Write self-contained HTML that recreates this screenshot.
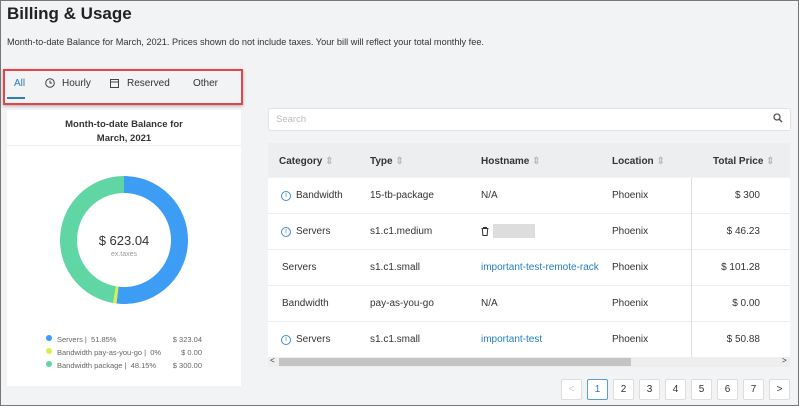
<html><head><style>
body{margin:0;width:799px;height:406px;overflow:hidden;background:#f1f3f4;font-family:"Liberation Sans",sans-serif;color:#333;position:relative}
.a{position:absolute}
.frame{position:absolute;left:0;top:0;width:797px;height:404px;border:1px solid #777}
.t{font-size:10px;color:#333}
.hd{font-size:10px;font-weight:bold;color:#333}
.lnk{color:#1f7fbf}
.pg{position:absolute;top:379px;width:19px;height:19px;border:1px solid #ddd;background:#fff;border-radius:2px;font-size:10px;text-align:center;line-height:19px;color:#333}
.info{position:absolute;left:0;top:1px;width:8px;height:8px;border:1px solid #3c8fd0;border-radius:50%;font-size:7px;line-height:8px;text-align:center;color:#3c8fd0;font-style:normal}
.row{position:absolute;left:268px;width:522px;height:35px;background:#fff;border-bottom:1px solid #eee}
.row span{position:absolute;top:12px;font-size:10px}
.ic{padding-left:15px}
</style></head><body>
<div class="frame"></div>
<div class="a" style="left:7px;top:4px;font-size:17px;font-weight:bold;color:#222">Billing &amp; Usage</div>
<div class="a" style="left:7px;top:37px;font-size:9.2px;color:#333;white-space:nowrap">Month-to-date Balance for March, 2021. Prices shown do not include taxes. Your bill will reflect your total monthly fee.</div>
<div class="a" style="left:3px;top:69px;width:236px;height:32px;border:2px solid #e5454a;box-shadow:0 1px 3px rgba(0,0,0,.3)"></div>
<div class="a" style="left:14px;top:78px;font-size:10px;color:#2a7bbf">All</div>
<div class="a" style="left:7px;top:97px;width:18px;height:2px;background:#2a7bbf"></div>
<svg class="a" style="left:45px;top:78px" width="10" height="10"><circle cx="5" cy="5" r="4.3" fill="none" stroke="#444"/><path d="M5 2.5V5h2" fill="none" stroke="#444"/></svg>
<div class="a t" style="left:62px;top:78px">Hourly</div>
<svg class="a" style="left:110px;top:78px" width="9" height="10"><rect x="0.5" y="1.5" width="8" height="8" fill="none" stroke="#444"/><path d="M0.5 4h8" stroke="#444"/></svg>
<div class="a t" style="left:127px;top:78px">Reserved</div>
<div class="a t" style="left:193px;top:78px">Other</div>
<div class="a" style="left:7px;top:110px;width:234px;height:276px;background:#fff"></div>
<div class="a" style="left:7px;top:145px;width:234px;height:1px;background:#eee"></div>
<div class="a" style="left:7px;top:118px;width:234px;text-align:center;font-size:9.5px;font-weight:bold;line-height:14px">Month-to-date Balance for<br>March, 2021</div>
<svg class="a" style="left:60px;top:176px" width="128" height="128"><g transform="rotate(-90 64 64)" fill="none" stroke-width="17">
<circle cx="64" cy="64" r="55.5" stroke="#3d9df5" stroke-dasharray="180.8 400"/>
<circle cx="64" cy="64" r="55.5" stroke="#d8ef4a" stroke-dasharray="0 180.8 3 400"/>
<circle cx="64" cy="64" r="55.5" stroke="#5fd6a4" stroke-dasharray="0 183.8 165 400"/></g></svg>
<div class="a" style="left:60px;top:233px;width:128px;text-align:center;font-size:13px;color:#333">$ 623.04</div>
<div class="a" style="left:60px;top:251px;width:128px;text-align:center;font-size:7px;color:#999">ex.taxes</div>
<div class="a" style="left:46px;top:335px;width:6px;height:6px;border-radius:50%;background:#3d9df5"></div>
<div class="a" style="left:46px;top:348px;width:6px;height:6px;border-radius:50%;background:#d8ef4a"></div>
<div class="a" style="left:46px;top:361px;width:6px;height:6px;border-radius:50%;background:#5fd6a4"></div>
<div class="a" style="left:57px;top:333px;font-size:7.5px;color:#666;line-height:13px">Servers | &nbsp;51.85%<br>Bandwidth pay-as-you-go | &nbsp;0%<br>Bandwidth package | &nbsp;48.15%</div>
<div class="a" style="left:160px;top:333px;width:42px;text-align:right;font-size:7.5px;color:#666;line-height:13px">$ 323.04<br>$ 0.00<br>$ 300.00</div>
<div class="a" style="left:268px;top:108px;width:521px;height:21px;background:#fff;border:1px solid #e3e3e3;border-radius:3px"></div>
<div class="a" style="left:276px;top:114px;font-size:9.5px;color:#bbb">Search</div>
<svg class="a" style="left:773px;top:113px" width="10" height="10"><circle cx="4" cy="4" r="3" fill="none" stroke="#555" stroke-width="1.3"/><path d="M6.2 6.2L9 9" stroke="#555" stroke-width="1.4"/></svg>
<div class="a" style="left:268px;top:143px;width:522px;height:34px;background:#eceef0"></div>
<div class="a hd" style="left:279px;top:156px">Category <span style="color:#bbb">⇕</span></div>
<div class="a hd" style="left:370px;top:156px">Type <span style="color:#bbb">⇕</span></div>
<div class="a hd" style="left:481px;top:156px">Hostname <span style="color:#bbb">⇕</span></div>
<div class="a hd" style="left:612px;top:156px">Location <span style="color:#bbb">⇕</span></div>
<div class="a hd" style="left:713px;top:156px">Total Price <span style="color:#bbb">⇕</span></div>
<div class="row" style="top:178px"><span style="left:13px" class="ic"><i class="info">i</i>Bandwidth</span><span style="left:102px">15-tb-package</span><span style="left:213px">N/A</span><span style="left:344px">Phoenix</span><span style="right:30px">$ 300</span></div>
<div class="row" style="top:214px"><span style="left:13px" class="ic"><i class="info">i</i>Servers</span><span style="left:102px">s1.c1.medium</span><svg style="position:absolute;left:213px;top:13px" width="8" height="9"><path d="M0.5 1.5h7M2.5 1.5V0.5h3v1M1.3 1.5l0.6 7h4.2l0.6-7" fill="none" stroke="#333"/></svg><span style="left:225px;top:10px;width:42px;height:14px;background:#ddd"></span><span style="left:344px">Phoenix</span><span style="right:30px">$ 46.23</span></div>
<div class="row" style="top:250px"><span style="left:14px">Servers</span><span style="left:102px">s1.c1.small</span><span style="left:213px" class="lnk">important-test-remote-rack</span><span style="left:344px">Phoenix</span><span style="right:30px">$ 101.28</span></div>
<div class="row" style="top:286px"><span style="left:14px">Bandwidth</span><span style="left:102px">pay-as-you-go</span><span style="left:213px">N/A</span><span style="left:344px">Phoenix</span><span style="right:30px">$ 0.00</span></div>
<div class="row" style="top:322px"><span style="left:13px" class="ic"><i class="info">i</i>Servers</span><span style="left:102px">s1.c1.small</span><span style="left:213px" class="lnk">important-test</span><span style="left:344px">Phoenix</span><span style="right:30px">$ 50.88</span></div>
<div class="a" style="left:691px;top:178px;width:1px;height:179px;background:#ddd"></div>
<div class="a" style="left:268px;top:357px;width:522px;height:10px;background:#eee"></div>
<div class="a" style="left:279px;top:358px;width:352px;height:8px;background:#c4c4c4"></div>
<div class="a" style="left:270px;top:356px;font-size:8px">&lt;</div>
<div class="a" style="left:782px;top:356px;font-size:8px">&gt;</div>
<div class="pg" style="left:561px;color:#ccc">&lt;</div>
<div class="pg" style="left:587px;border-color:#5a9fd4;color:#2a7bbf">1</div>
<div class="pg" style="left:613px">2</div>
<div class="pg" style="left:639px">3</div>
<div class="pg" style="left:665px">4</div>
<div class="pg" style="left:691px">5</div>
<div class="pg" style="left:717px">6</div>
<div class="pg" style="left:743px">7</div>
<div class="pg" style="left:769px">&gt;</div>
</body></html>
